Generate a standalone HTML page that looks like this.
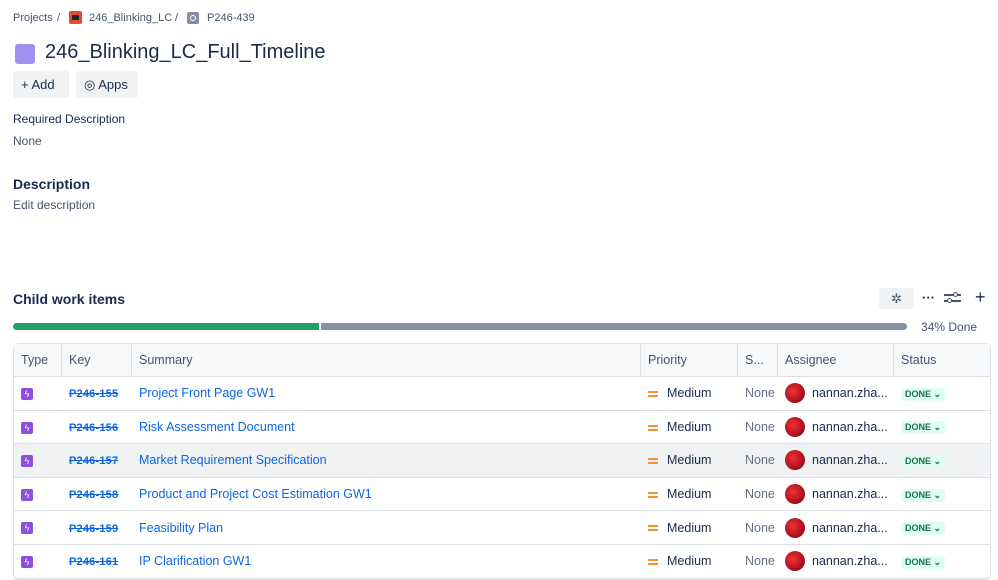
<!DOCTYPE html>
<html><head><meta charset="utf-8"><style>
*{box-sizing:border-box;margin:0;padding:0}
body{width:998px;height:577px;overflow:hidden;background:#fff;font-family:"Liberation Sans",sans-serif;color:#172b4d;position:relative}
.a{position:absolute;white-space:nowrap}
.bc{font-size:11px;color:#44546f;top:12px}
table{position:absolute;left:13px;top:343px;width:978px;border-collapse:separate;border-spacing:0;border:1px solid #dcdfe4;border-radius:6px;font-size:12.5px;table-layout:fixed}
th{height:33px;text-align:left;font-weight:normal;color:#44546f;padding-left:7px;border-right:1px solid #dcdfe4;border-bottom:1px solid #dcdfe4;background:#f7f8f9}
th:last-child{border-right:none}
td{height:33.6px;padding-left:7px;border-bottom:1px solid #dcdfe4;color:#172b4d;white-space:nowrap}
tr.h td{background:#f1f2f4}
.ic{display:inline-block;width:12px;height:12px;background:#8f4fe0;border-radius:2px;color:#fff;font-size:9px;text-align:center;line-height:12px;vertical-align:middle}
.k{color:#0c66e4;text-decoration:line-through;font-size:11px;font-weight:bold;letter-spacing:0.2px}
.s{color:#0c66e4}
.p{display:inline-block;width:10px;height:6px;border-top:2px solid #f79232;border-bottom:2px solid #f79232;margin-right:9px;vertical-align:middle}
.n{color:#626f86}
.as{display:flex;align-items:center}
.av{display:inline-block;width:20px;height:20px;border-radius:50%;background:radial-gradient(circle at 40% 40%,#e33 0,#b01020 60%,#3a1a10 100%);margin-right:7px}
.d{display:inline-block;background:#dcfff1;color:#216e4e;font-size:9px;font-weight:bold;padding:1px 4px;border-radius:3px}
</style></head><body>
<div class="a bc" style="left:13px">Projects</div>
<div class="a bc" style="left:57px">/</div>
<div class="a" style="left:69px;top:11px;width:13px;height:13px;background:#e5492f;border-radius:2px"><div style="margin:4px 3px;width:7px;height:5px;background:#222;border-radius:1px"></div></div>
<div class="a bc" style="left:89px">246_Blinking_LC</div>
<div class="a bc" style="left:175px">/</div>
<div class="a" style="left:187px;top:12px;width:12px;height:12px;background:#8590a2;border-radius:2px"><div style="margin:3px;width:6px;height:6px;border:1.5px solid #fff;border-radius:50%"></div></div>
<div class="a bc" style="left:207px">P246-439</div>
<div class="a" style="left:15px;top:44px;width:20px;height:20px;background:#9f8fef;border-radius:3px"></div>
<div class="a" style="left:45px;top:41px;font-size:20px">246_Blinking_LC_Full_Timeline</div>
<div class="a" style="left:13px;top:71px;width:56px;height:27px;background:#f1f2f4;border-radius:3px;font-size:13px;padding:6px 8px">+ Add</div>
<div class="a" style="left:76px;top:71px;width:62px;height:27px;background:#f1f2f4;border-radius:3px;font-size:13px;padding:6px 8px">◎ Apps</div>
<div class="a" style="left:13px;top:112px;font-size:12px">Required Description</div>
<div class="a" style="left:13px;top:134px;font-size:12px;color:#44546f">None</div>
<div class="a" style="left:13px;top:176px;font-size:14px;font-weight:bold">Description</div>
<div class="a" style="left:13px;top:198px;font-size:12px;color:#44546f">Edit description</div>
<div class="a" style="left:13px;top:291px;font-size:14px;font-weight:bold">Child work items</div>
<div class="a" style="left:879px;top:288px;width:35px;height:21px;background:#f1f2f4;border-radius:3px;text-align:center;font-size:13px;color:#44546f;line-height:21px">✲</div>
<div class="a" style="left:922px;top:290px;font-size:13px;font-weight:bold">···</div>
<div class="a" style="left:944px;top:292px;width:17px;height:12px"><div style="position:absolute;top:2px;width:17px;height:1.5px;background:#44546f"></div><div style="position:absolute;top:8px;width:17px;height:1.5px;background:#44546f"></div><div style="position:absolute;left:9px;top:0;width:5px;height:5px;border:1.5px solid #44546f;border-radius:50%;background:#fff"></div><div style="position:absolute;left:3px;top:6px;width:5px;height:5px;border:1.5px solid #44546f;border-radius:50%;background:#fff"></div></div>
<div class="a" style="left:975px;top:287px;font-size:18px">+</div>
<div class="a" style="left:13px;top:323px;width:306px;height:7px;background:#22a06b;border-radius:4px 0 0 4px"></div>
<div class="a" style="left:321px;top:323px;width:586px;height:7px;background:#8590a2;border-radius:0 4px 4px 0"></div>
<div class="a" style="left:921px;top:320px;font-size:12px;color:#44546f">34% Done</div>
<table>
<colgroup><col style="width:48px"><col style="width:70px"><col style="width:509px"><col style="width:97px"><col style="width:40px"><col style="width:116px"><col></colgroup>
<tr><th>Type</th><th>Key</th><th>Summary</th><th>Priority</th><th>S...</th><th>Assignee</th><th>Status</th></tr>
<tr><td><span class="ic">ϟ</span></td><td><span class="k">P246-155</span></td><td class="s">Project Front Page GW1</td><td><span class="p"></span>Medium</td><td class="n">None</td><td><div class="as"><span class="av"></span>nannan.zha...</div></td><td><span class="d">DONE ⌄</span></td></tr>
<tr><td><span class="ic">ϟ</span></td><td><span class="k">P246-156</span></td><td class="s">Risk Assessment Document</td><td><span class="p"></span>Medium</td><td class="n">None</td><td><div class="as"><span class="av"></span>nannan.zha...</div></td><td><span class="d">DONE ⌄</span></td></tr>
<tr class="h"><td><span class="ic">ϟ</span></td><td><span class="k">P246-157</span></td><td class="s">Market Requirement Specification</td><td><span class="p"></span>Medium</td><td class="n">None</td><td><div class="as"><span class="av"></span>nannan.zha...</div></td><td><span class="d">DONE ⌄</span></td></tr>
<tr><td><span class="ic">ϟ</span></td><td><span class="k">P246-158</span></td><td class="s">Product and Project Cost Estimation GW1</td><td><span class="p"></span>Medium</td><td class="n">None</td><td><div class="as"><span class="av"></span>nannan.zha...</div></td><td><span class="d">DONE ⌄</span></td></tr>
<tr><td><span class="ic">ϟ</span></td><td><span class="k">P246-159</span></td><td class="s">Feasibility Plan</td><td><span class="p"></span>Medium</td><td class="n">None</td><td><div class="as"><span class="av"></span>nannan.zha...</div></td><td><span class="d">DONE ⌄</span></td></tr>
<tr><td><span class="ic">ϟ</span></td><td><span class="k">P246-161</span></td><td class="s">IP Clarification GW1</td><td><span class="p"></span>Medium</td><td class="n">None</td><td><div class="as"><span class="av"></span>nannan.zha...</div></td><td><span class="d">DONE ⌄</span></td></tr>
</table>
</body></html>
